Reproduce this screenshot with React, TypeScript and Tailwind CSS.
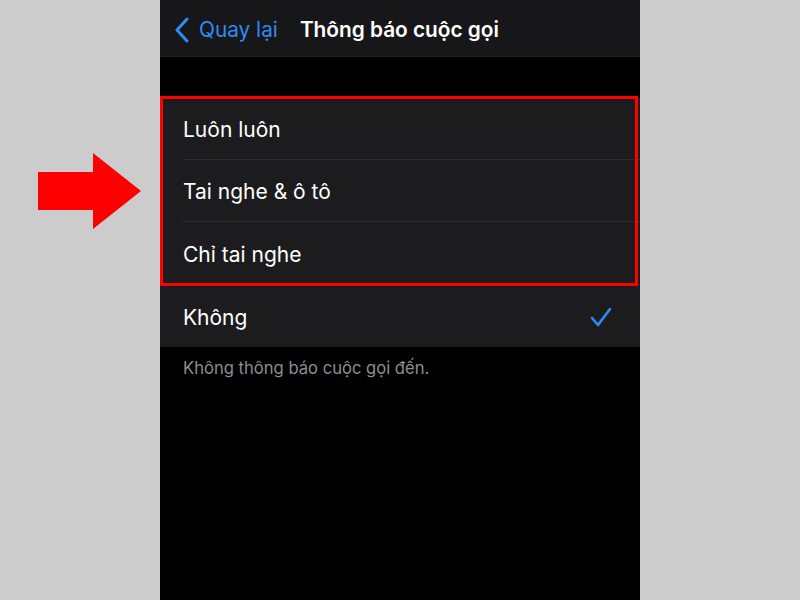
import React from 'react';

const options = ['Luôn luôn', 'Tai nghe & ô tô', 'Chỉ tai nghe', 'Không'];

const Arrow = () => (
  <svg width="104" height="76" viewBox="0 0 104 76" className="absolute left-[38px] top-[153px]">
    <polygon points="0,19 55,19 55,0 103,38 55,76 55,57 0,57" fill="#ff0000" />
  </svg>
);

export default function App() {
  return (
    <div
      className="relative w-[800px] h-[600px] bg-[#cccccc] flex justify-center overflow-hidden"
      style={{ fontFamily: 'Inter, "Noto Sans", sans-serif' }}
    >
      <Arrow />
      <div className="relative w-[480px] h-full bg-black flex flex-col">
        {/* nav bar */}
        <div className="h-[57px] bg-[#171719] flex items-center border-b border-[#222224] pt-[3px]">
          <div className="flex items-center pl-[14px] text-[#2f8bf5]">
            <svg width="16" height="26" viewBox="0 0 16 26" className="mr-[9px]">
              <path d="M13 2 L3 13 L13 24" fill="none" stroke="#2f8bf5" strokeWidth="3" strokeLinecap="round" strokeLinejoin="round" />
            </svg>
            <span className="text-[20.8px]">Quay lại</span>
          </div>
          <span className="ml-[22px] text-white text-[20.8px] font-semibold">Thông báo cuộc gọi</span>
        </div>

        <div className="h-[40px]" />

        {/* list */}
        <div className="bg-[#1c1c1e]">
          {options.map((o, i) => (
            <div key={o} className="pl-[23px]">
              <div
                className={`h-[62.5px] flex items-center justify-between pr-[28px] pt-[3px] ${i < options.length - 1 ? 'border-b border-[#2c2c2e]' : ''}`}
              >
                <span className="text-white text-[21px]">{o}</span>
                {o === 'Không' && (
                  <svg width="22" height="20" viewBox="0 0 22 20">
                    <path d="M2 11 L8 18 L20 2" fill="none" stroke="#2f8bf5" strokeWidth="2.6" strokeLinecap="round" strokeLinejoin="round" />
                  </svg>
                )}
              </div>
            </div>
          ))}
        </div>

        <p className="pl-[23px] pt-[9px] text-[#8d8d92] text-[16.6px]">Không thông báo cuộc gọi đến.</p>

        {/* highlight box */}
        <div className="absolute left-0 top-[96px] w-[478px] h-[190px] border-[3px] border-[#ff0000]" />
      </div>
    </div>
  );
}
